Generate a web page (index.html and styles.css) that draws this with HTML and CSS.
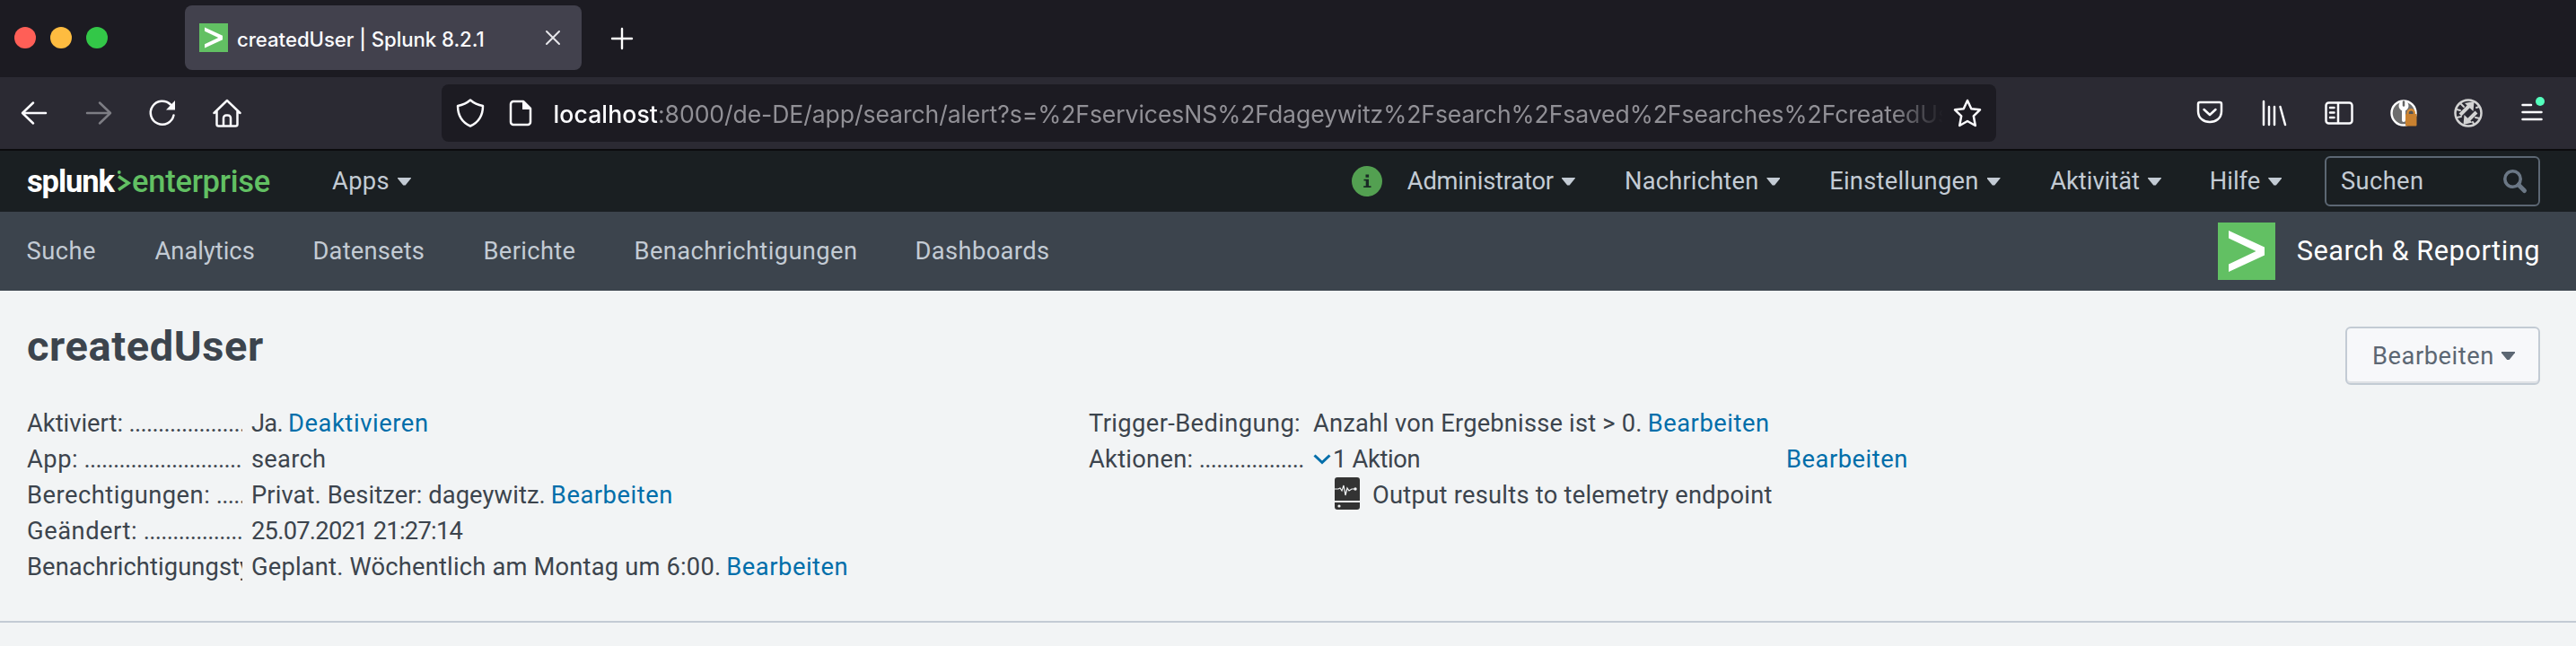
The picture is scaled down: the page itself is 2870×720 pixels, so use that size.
FILE: index.html
```html
<!DOCTYPE html>
<html lang="de">
<head>
<meta charset="utf-8">
<title>createdUser | Splunk 8.2.1</title>
<link rel="stylesheet" href="styles.css">
</head>
<body>
<div class="tabbar">
  <div class="lights"><i class="light red"></i><i class="light yellow"></i><i class="light green"></i></div>
  <div class="tab">
    <svg class="favicon" viewBox="0 0 64 64"><path fill="#62c063" d="M0 0h64v64H0z"/><path fill="#fff" d="M12 9l40 18.500v9L12 55v-8.500L42.500 32 12 17.500z"/></svg>
    <span class="tab-title">createdUser | Splunk 8.2.1</span>
    <svg class="close" viewBox="0 0 16 16"><path d="M1 1l14 14M15 1L1 15" stroke="#e6e6ea" stroke-width="2" stroke-linecap="round"/></svg>
  </div>
  <svg class="plus" viewBox="0 0 24 24"><path d="M12 1v22M1 12h22" stroke="#fff" stroke-width="2.400" stroke-linecap="round"/></svg>
</div>

<div class="toolbar">
  <div class="nav-buttons">
    <svg viewBox="0 0 32 32"><path d="M29 16H3M15 4.500L3 16l12 11.500"/></svg>
    <svg class="dim" viewBox="0 0 32 32"><path d="M3 16h26M17 4.500L29 16 17 27.500"/></svg>
    <svg viewBox="0 0 32 32"><path d="M28.500 18.500A13 13 0 1 1 25 6.500"/><path d="M30 2v10.500H20z" class="solid"/></svg>
    <svg viewBox="0 0 32 32"><path d="M1.500 16L16 2l14.500 14M4.500 14v14.500a2 2 0 0 0 2 2h19a2 2 0 0 0 2-2V14M12 30V21.500a3 3 0 0 1 3-3h2a3 3 0 0 1 3 3V30"/></svg>
  </div>
  <div class="urlbar">
    <svg class="shield" viewBox="0 0 32 32"><path d="M16 1.500c4 3.500 8.500 5.500 14 6.500 0 11-4 18-14 22.500C6 26 2 19 2 8c5.500-1 10-3 14-6.500z"/></svg>
    <svg class="doc" viewBox="0 0 32 32"><path d="M8 3h11l8 8v15a3 3 0 0 1-3 3H8a3 3 0 0 1-3-3V6a3 3 0 0 1 3-3z"/><path class="solid" d="M18 2l10 10h-10z"/></svg>
    <div class="url"><span class="host">localhost</span>:8000/de-DE/app/search/alert?s=%2FservicesNS%2Fdageywitz%2Fsearch%2Fsaved%2Fsearches%2FcreatedUser</div>
    <svg class="star" viewBox="0 0 32 32"><path d="M16 2l4.300 9.200L30 12.300l-7.200 7 2 10.700L16 25l-8.800 5 2-10.700L2 12.300l9.700-1.100z"/></svg>
  </div>
  <div class="extensions">
    <svg viewBox="0 0 32 32"><path d="M5 4h22a2 2 0 0 1 2 2v8c0 16-26 16-26 0V6a2 2 0 0 1 2-2z"/><path d="M9.500 12l6.500 6 6.500-6"/></svg>
    <svg viewBox="0 0 32 32"><path d="M4 3v26M10 9v20M16 9v20M22.500 9L28 29"/></svg>
    <svg viewBox="0 0 32 32"><rect x="1.500" y="4.500" width="29" height="23" rx="3"/><path d="M15 5v22M6 10h4.500M6 15.500h4.500M6 21h4.500" /></svg>
    <svg viewBox="0 0 32 32"><circle cx="16" cy="16" r="13.500" fill="#6d6d6d" stroke="#fff" stroke-width="2.400"/><path d="M16 10v14" stroke="#fff" stroke-width="4"/><circle cx="16" cy="8" r="5.500" fill="#fff" stroke="none"/><path d="M16 3.500v4" stroke="#666" stroke-width="2.500"/><path d="M20.500 18v-2a3.700 3.700 0 0 1 7.400 0V18" stroke="#d48a35" stroke-width="2.400" fill="#555"/><rect x="18" y="17" width="12.500" height="13.500" rx="1" fill="#c98130" stroke="none"/></svg>
    <svg viewBox="0 0 32 32"><circle cx="16" cy="16" r="14.500" stroke="#d3d3d3"/><path d="M7 18L18 7M15 25L25 15" stroke="#d3d3d3" stroke-width="4" stroke-linecap="butt"/><path d="M22.500 3l-1 11-9.500-9zM10.500 29l1-11 9 8.500z" fill="#d3d3d3" stroke="none"/><path d="M3 12l4 1M3 21l5-1M25 10l3-1M24 21l5 1M8 6l3 3M22 28l-1-2" stroke="#d3d3d3" stroke-width="2"/></svg>
    <svg viewBox="0 0 32 32" class="menu"><path d="M5.500 7h9.500M5.500 15h21M5.500 23h21"/><circle cx="25" cy="3" r="5" fill="#54ffbd" stroke="none"/></svg>
  </div>
</div>

<div class="splunkbar">
  <div class="logo"><span class="brand">splunk</span><svg viewBox="0 0 15 24"><path d="M1 6.500l11 7.500L1 21.500" fill="none" stroke="#62c063" stroke-width="3.600"/><circle cx="1.800" cy="2" r="1.900" fill="#62c063"/></svg><span class="product">enterprise</span></div>
  <div class="item k35">Apps<i class="caret"></i></div>
  <svg class="info" viewBox="0 0 34 34"><circle cx="17" cy="17" r="17" fill="#53a051"/><path fill="#1a2b25" d="M15.500 9.500h3.600v3.200h-3.600zM13.500 14.700h5.500V22.300h2.500v1.700h-8.300v-1.700h2.500v-5.900H13.500z"/></svg>
  <div class="item k-19">Administrator<i class="caret"></i></div>
  <div class="item k19">Nachrichten<i class="caret"></i></div>
  <div class="item k26">Einstellungen<i class="caret"></i></div>
  <div class="item">Aktivität<i class="caret"></i></div>
  <div class="item">Hilfe<i class="caret"></i></div>
  <div class="search"><span class="k39">Suchen</span><svg viewBox="0 0 26 26"><circle cx="10.500" cy="10.500" r="8.700" fill="none" stroke="#6b7785" stroke-width="3.600"/><path d="M17 17l6.500 6.500" stroke="#6b7785" stroke-width="5" stroke-linecap="round"/></svg></div>
</div>

<div class="appbar">
  <nav class="appnav">
    <span class="k50">Suche</span><span>Analytics</span><span class="k19">Datensets</span><span class="k35">Berichte</span><span class="k39">Benachrichtigungen</span><span class="k39">Dashboards</span>
  </nav>
  <div class="app">
    <svg viewBox="0 0 64 64"><path fill="#62c063" d="M0 0h64v64H0z"/><path fill="#fff" d="M12 9l40 18.500v9L12 55v-8.500L42.500 32 12 17.500z"/></svg>
    <span class="app-name">Search &amp; Reporting</span>
  </div>
</div>

<main class="page">
  <div class="page-head">
    <h1>createdUser</h1>
    <div class="button"><span class="k56">Bearbeiten</span><i class="caret"></i></div>
  </div>
  <div class="details">
    <dl>
      <dt><span>Aktiviert:</span><span class="dots">....................</span></dt>
      <dd><span class="k-74">Ja.</span><a class="k60">Deaktivieren</a></dd>
      <dt><span class="k50">App:</span><span class="dots">...........................</span></dt>
      <dd><span class="k26">search</span></dd>
      <dt><span class="k50">Berechtigungen:</span><span class="dots">.....</span></dt>
      <dd><span class="k10">Privat. Besitzer: dageywitz.</span><a class="k56">Bearbeiten</a></dd>
      <dt><span class="k56">Geändert:</span><span class="dots">.................</span></dt>
      <dd><span class="k-74">25.07.2021 21:27:14</span></dd>
      <dt><span class="k10">Benachrichtigungstyp:</span></dt>
      <dd><span class="k19">Geplant. Wöchentlich am Montag um 6:00.</span><a class="k56">Bearbeiten</a></dd>
    </dl>
    <dl>
      <dt><span class="k39">Trigger-Bedingung:</span></dt>
      <dd><span class="k19">Anzahl von Ergebnisse ist &gt; 0.</span><a class="k56">Bearbeiten</a></dd>
      <dt><span class="k26">Aktionen:</span><span class="dots">..................</span></dt>
      <dd class="actions">
        <div class="summary"><svg class="chev" viewBox="0 0 20 12"><path d="M1.500 1.500L10 9.500l8.500-8" fill="none" stroke="#006eaa" stroke-width="3"/></svg><span class="k-34">1 Aktion</span></div>
        <a class="k56">Bearbeiten</a>
        <div class="action"><svg viewBox="0 0 28 36"><path fill="#333" d="M3 0h22a3 3 0 0 1 3 3v23H0V3a3 3 0 0 1 3-3zM0 28h28v5a3 3 0 0 1-3 3H3a3 3 0 0 1-3-3z"/><path d="M0 13h4l2-1 2 3 2-6 2 11 2-8 2 3 3-2h4" fill="none" stroke="#f2f4f5" stroke-width="1.200"/><circle cx="23" cy="13" r="1.700" fill="#f2f4f5"/><circle cx="5" cy="32" r="1.600" fill="#f2f4f5"/></svg><span class="k26">Output results to telemetry endpoint</span></div>
      </dd>
    </dl>
  </div>
</main>
</body>
</html>
```
FILE: styles.css
```css
* { box-sizing: border-box; }
body {
  margin: 0;
  width: 2870px;
  height: 720px;
  overflow: hidden;
  background: #f2f4f5;
  color: #3c444d;
  font: 27.3px/40px Roboto, sans-serif;
}
svg { display: block; flex: none; overflow: visible; }

/* Browser tab strip */
.tabbar {
  height: 86px;
  background: #1c1b22;
  display: flex;
  align-items: flex-start;
}
.lights { display: flex; gap: 16px; padding: 30px 0 0 16px; width: 206px; }
.light { width: 24px; height: 24px; border-radius: 50%; }
.red { background: #ff5f57; }
.yellow { background: #febc40; }
.green { background: #33c748; }
.tab {
  width: 442px;
  height: 72px;
  margin-top: 6px;
  padding: 0 24px 0 16px;
  border-radius: 8px;
  background: #42414d;
  color: #fbfbfe;
  display: flex;
  align-items: center;
}
.favicon { width: 32px; height: 32px; }
.tab-title {
  flex: 1;
  padding: 3px 0 0 10px;
  font: 500 22.2px/30px Inter, sans-serif;
  letter-spacing: -.05px;
  white-space: nowrap;
}
.close { width: 16px; height: 16px; }
.plus { width: 24px; height: 24px; margin: 31px 0 0 33px; }

/* Browser toolbar */
.toolbar {
  height: 82px;
  border-bottom: 2px solid #0c0c0e;
  background: #2b2a33;
  display: flex;
  align-items: center;
}
.toolbar svg {
  width: 32px;
  height: 32px;
  fill: none;
  stroke: #fbfbfe;
  stroke-width: 2.5;
  stroke-linecap: round;
  stroke-linejoin: round;
}
.toolbar .solid { fill: #fbfbfe; stroke: none; }
.toolbar .dim { opacity: .4; }
.nav-buttons { display: flex; gap: 39.700px; padding-left: 22px; width: 492px; }
.urlbar {
  width: 1732px;
  height: 64px;
  border-radius: 8px;
  background: #1c1b22;
  display: flex;
  align-items: center;
  padding: 0 16px;
}
.toolbar .doc { margin-left: 24px; }
.url {
  width: 1552px;
  margin-left: 20.500px;
  padding-top: 2px;
  overflow: hidden;
  white-space: nowrap;
  color: #919096;
  font: 26.6px/34px Inter, sans-serif;
  letter-spacing: -.09px;
  -webkit-mask-image: linear-gradient(to right, #000 1490px, transparent 1548px);
  mask-image: linear-gradient(to right, #000 1490px, transparent 1548px);
}
.host { color: #fbfbfe; font-weight: 500; letter-spacing: .1px; }
.toolbar .star { margin-left: auto; }
.extensions {
  display: flex;
  gap: 39.900px;
  margin-left: 222px;
}

/* Splunk bar */
.splunkbar {
  height: 68px;
  background: #1a1f22;
  color: #c3cbd4;
  display: grid;
  grid-template-columns: 340px 1135.500px 62.300px 242.200px 228.200px 246px 177.600px 128.200px 240px;
  padding-left: 30px;
  align-items: center;
  white-space: nowrap;
}
.logo { display: flex; align-items: center; font-size: 34.5px; }
.brand { color: #fff; font-weight: 700; letter-spacing: -1.100px; width: 101px; }
.logo svg { width: 15px; height: 24px; }
.product { color: #62c063; font-weight: 500; letter-spacing: -.25px; margin-left: 1px; }
.item { display: flex; align-items: center; }
.caret {
  width: 15px;
  height: 9px;
  margin-left: 9px;
  background: currentColor;
  clip-path: polygon(0 0, 100% 0, 100% 15%, 58% 100%, 42% 100%, 0 15%);
}
.info { width: 34px; height: 34px; }
.search {
  height: 56px;
  border: 2px solid #5c6773;
  border-radius: 6px;
  padding: 0 13px 0 16px;
  display: flex;
  align-items: center;
  justify-content: space-between;
}
.search svg { width: 26px; height: 26px; }

/* App bar */
.appbar {
  height: 88px;
  background: #3c444d;
  color: #c3cbd4;
  display: flex;
  align-items: center;
  justify-content: space-between;
  padding: 0 40px 0 29.500px;
  white-space: nowrap;
}
.appnav { display: grid; grid-template-columns: 143px 176px 190px 168px 313px auto; }
.app { display: flex; align-items: center; gap: 24px; color: #fff; }
.app svg { width: 64px; height: 64px; }
.app-name { font-size: 30.8px; letter-spacing: .5px; }

/* Page */
.page { height: 370px; border-bottom: 2px solid #c3cbd4; padding: 35px 40px 0 30px; }
.page-head { display: flex; justify-content: space-between; align-items: flex-start; }
h1 { margin: 0; font-size: 47px; line-height: 54px; letter-spacing: .6px; }
.button {
  width: 217px;
  height: 65px;
  margin-top: 5px;
  padding-left: 28px;
  border: 2px solid #c3cbd4;
  border-radius: 6px;
  background: #f7f8fa;
  box-shadow: inset 0 -2px 0 #dfe1e5;
  color: #5c6773;
  display: flex;
  align-items: center;
}
.button .caret { margin-left: 8px; }
.details { display: grid; grid-template-columns: 1183px auto; margin-top: 23px; }
dl { margin: 0; display: grid; grid-template-columns: 240px auto; column-gap: 10px; align-content: start; }
dt { display: flex; overflow: hidden; height: 40px; white-space: nowrap; }
dd { margin: 0; display: flex; gap: 6px; white-space: nowrap; }
.dots { margin-left: 6.500px; letter-spacing: -.7px; }
a { color: #006eaa; }
.actions { display: grid; grid-template-columns: 527px auto; gap: 0; }
.summary { display: flex; align-items: center; }
.chev { width: 20px; height: 12px; margin-right: 2px; }
.action { display: flex; padding-left: 24px; gap: 14px; }
.action svg { width: 28px; height: 36px; }

/* Tracking */
.k-74 { letter-spacing: -.74px; }
.k-34 { letter-spacing: -.34px; }
.k-19 { letter-spacing: -.19px; }
.k10 { letter-spacing: .1px; }
.k19 { letter-spacing: .19px; }
.k26 { letter-spacing: .26px; }
.k35 { letter-spacing: .35px; }
.k39 { letter-spacing: .39px; }
.k50 { letter-spacing: .5px; }
.k56 { letter-spacing: .54px; }
.k60 { letter-spacing: .6px; }
```
